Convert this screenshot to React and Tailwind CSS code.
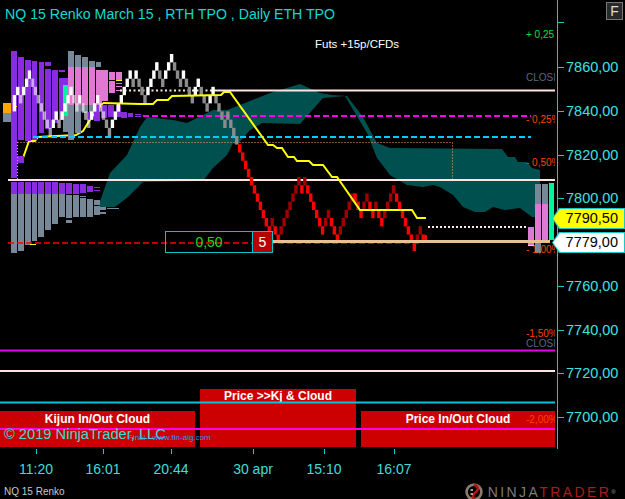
const PURPLE = "#8a2be2";
const GREY = "#778899";
const PINK = "#e078d4";
const SPRING = "#00f59a";

const BARS = [
  [11, 51, 6, 127, PURPLE], [18, 57, 6, 83, PURPLE], [25, 60, 6, 81, PURPLE], [32, 61, 5, 79, PURPLE],
  [39, 62, 5, 71, PURPLE], [45, 62, 6, 4, PURPLE], [45, 69, 6, 60, PURPLE], [52, 70, 6, 53, PURPLE],
  [59, 70, 6, 2, PURPLE], [59, 78, 9, 42, PURPLE], [63, 116, 5, 16, GREY], [63, 85, 5, 31, SPRING],
  [68, 51, 6, 89, GREY], [75, 55, 6, 78, GREY], [82, 57, 6, 56, GREY], [89, 61, 6, 52, GREY], [96, 62, 5, 5, GREY],
  [68, 67, 6, 38, PINK], [75, 67, 6, 38, PINK], [82, 67, 6, 38, PINK], [89, 67, 6, 38, PINK], [96, 70, 6, 35, PINK],
  [102, 70, 6, 31, PINK], [109, 72, 6, 8, PINK], [109, 81, 6, 12, PINK], [116, 72, 6, 8, PINK],
  [116, 83, 6, 1, PINK], [116, 86, 6, 1, PINK], [116, 90, 6, 1, PINK], [116, 80, 6, 1, "#ffff00"],
  [87, 112, 5, 8, PURPLE], [94, 105, 6, 16, PURPLE], [101, 105, 6, 13, PURPLE], [108, 105, 6, 12, PURPLE],
  [116, 105, 5, 12, PURPLE], [121, 112, 6, 6, PURPLE], [128, 113, 5, 4, PURPLE], [135, 114, 6, 1, PURPLE], [135, 116, 6, 1, PURPLE],
  [3, 103, 8, 10, "#ffa500"], [3, 113, 8, 9, GREY], [17, 156, 7, 7, PURPLE], [14, 106, 3, 1, "#ffff00"],
  [11, 182, 6, 12, PURPLE], [18, 182, 6, 12, PURPLE], [25, 182, 6, 12, PURPLE], [32, 182, 5, 12, PURPLE],
  [38, 182, 6, 12, PURPLE], [45, 182, 6, 12, PURPLE], [52, 182, 6, 12, PURPLE], [59, 183, 6, 11, PURPLE],
  [66, 183, 6, 11, PURPLE], [73, 184, 6, 10, PURPLE], [80, 184, 6, 9, PURPLE], [87, 186, 6, 6, PURPLE],
  [94, 187, 6, 1, PURPLE], [94, 190, 6, 1, PURPLE],
  [11, 194, 6, 59, GREY], [18, 194, 6, 57, GREY], [25, 194, 6, 51, GREY], [32, 194, 5, 47, GREY], [38, 194, 6, 43, GREY],
  [45, 194, 6, 36, GREY], [52, 194, 6, 30, GREY], [59, 194, 6, 23, GREY], [66, 195, 6, 23, GREY], [66, 220, 6, 3, GREY],
  [73, 195, 6, 22, GREY], [80, 196, 6, 1, GREY], [80, 198, 6, 19, GREY], [87, 199, 6, 18, GREY],
  [94, 200, 6, 5, GREY], [94, 206, 6, 9, GREY], [100, 207, 6, 3, GREY], [100, 212, 6, 2, GREY], [107, 208, 6, 1, GREY], [113, 208, 6, 1, GREY],
  [30, 244, 6, 1, "#ffff00"],
  [528, 227, 6, 18, PINK], [528, 245, 6, 1, "#ffff00"], [535, 184, 6, 20, GREY], [535, 204, 6, 39, PINK], [535, 243, 6, 10, GREY],
  [542, 184, 6, 20, GREY], [542, 204, 6, 36, PINK], [549, 183, 5, 57, SPRING],
];

const CLOUD = "98,207 110,173 127,155 140,127 147,117 173,120 187,123 213,110 227,110 245,103 270,93 300,84 320,93 332,95 347,96 363,117 377,143 390,148 502,149 508,157 515,157 518,162 527,162 532,168 540,170 540,217 532,217 520,208 505,210 493,207 485,212 475,212 463,207 453,195 440,187 433,185 423,187 407,185 390,175 377,158 367,133 355,113 345,96 323,98 300,124 262,123 250,130 237,145 233,143 227,155 213,168 203,181 143,182 128,197 115,207";

const KIJUN_A = "23,158 29,141 35,141 38,137 76,135 83,131 88,123 91,118 103,103";
const KIJUN_B = "103,103 140,104 153,104 157,100 168,100 172,96 221,95 224,92 230,92 263,138 268,145 273,145 277,148 282,148 288,157 294,157 297,161 309,161 313,165 323,165 332,177 337,177 360,210 412,210 417,218 426,218";

const SEQ =
  "UDUUUDDDDDDDUUDUUUUDDUDDDUUUDDDDUUUU" +
  "UUUDUDDDUUUUDDUUUDDDUDDDUUDDDUUDDDDgDDD" +
  "DDDDDDDDDDDUDDUUUUUUUDUDDDDDDUUDDDUUUUU^DDDUUDDUDDUUUUDDDDDDDUUD";

function makeBricks() {
  const s = 8.2;
  const out = [
    { x: 12.7, y: 103, c: "#ffffff" },
    { x: 12.7, y: 95, c: "#ffffff" },
  ];
  let top = 95;
  let bot = 103;
  let i = 0;
  for (const ch of SEQ) {
    if (ch === "^") {
      top -= s;
      bot -= s;
      continue;
    }
    const isRed = i >= 75;
    if (ch === "D") {
      top = bot;
      bot = bot + s;
    } else {
      bot = top;
      top = top - s;
    }
    let c;
    if (isRed) c = ch === "D" ? "#ff0000" : "#a00000";
    else if (ch === "U") c = "#ffffff";
    else if (ch === "g") c = "#8c8c8c";
    else c = i > 35 ? "#8c8c8c" : "rgba(255,255,255,0.58)";
    out.push({ x: 16 + i * 2.96, y: top, c });
    i += 1;
  }
  return out;
}

const BRICKS = makeBricks();

function Chart() {
  return (
    <svg viewBox="0 0 557 449" className="absolute inset-0 h-[449px] w-[557px]">
      <polygon points={CLOUD} fill="#005050" />
      <polyline points={KIJUN_A} fill="none" stroke="#ffff00" strokeWidth="2" />
      {BARS.map(([x, y, w, h, c], i) => (
        <rect key={i} x={x} y={y} width={w} height={h} fill={c} />
      ))}
      <polyline points="17.5,142.5 452.5,142.5 452.5,180" fill="none" stroke="#ffa070" strokeDasharray="1 2" />
      <line x1="17.5" y1="142" x2="17.5" y2="180" stroke="#ffa070" strokeDasharray="1 2" />
      <line x1="120" y1="90.5" x2="210" y2="90.5" stroke="#ffe4e1" strokeWidth="2" strokeDasharray="2 2.5" />
      <line x1="210" y1="90.5" x2="555" y2="90.5" stroke="#ffe4e1" strokeWidth="2" />
      <line x1="143" y1="116" x2="531" y2="116" stroke="#ff00ee" strokeWidth="2" strokeDasharray="6 3" />
      <line x1="33" y1="137" x2="531" y2="137" stroke="#00ccff" strokeWidth="2" strokeDasharray="6 3" />
      <line x1="8" y1="180" x2="555" y2="180" stroke="#ffe4e1" strokeWidth="2" />
      <line x1="8" y1="243" x2="420" y2="243" stroke="#ff0000" strokeWidth="1.6" strokeDasharray="6 3" />
      <line x1="428" y1="227" x2="527" y2="227" stroke="#ffe4e1" strokeWidth="2" strokeDasharray="2 2" />
      {BRICKS.map((b, i) => (
        <rect key={i} x={b.x} y={b.y} width="3.4" height="8.4" fill={b.c} />
      ))}
      <rect x="425" y="235" width="2" height="6" fill="#ff0000" />
      <polyline points={KIJUN_B} fill="none" stroke="#ffff00" strokeWidth="2" />
      <line x1="273" y1="241.5" x2="550" y2="241.5" stroke="#e8c192" strokeWidth="3" />
      <line x1="0" y1="350.5" x2="555" y2="350.5" stroke="#e600e6" strokeWidth="2" />
      <line x1="0" y1="371" x2="555" y2="371" stroke="#ffe4e1" strokeWidth="2" />
      <line x1="0" y1="402.5" x2="555" y2="402.5" stroke="#00c4e0" strokeWidth="2" />
      <line x1="0" y1="429" x2="555" y2="429" stroke="#ff00e6" strokeWidth="2" />
    </svg>
  );
}

function PriceAxis() {
  return (
    <div className="flex w-[68px] flex-col border-l border-[#1ec8c8] pt-[22px]">
      <div className="h-[1px] w-[6px] shrink-0 bg-[#1ec8c8]" />
      <div className="h-[43px] shrink-0" />
      {["7860,00", "7840,00", "7820,00", "7800,00", "", "7760,00", "7740,00", "7720,00", "7700,00"].map((p, i) => (
        <div key={i} className="flex h-[43.75px] shrink-0 items-start gap-[2px]">
          <div className="mt-[1px] h-[1px] w-[6px] bg-[#1ec8c8]" />
          <span className="-mt-[7px] text-[14.5px] leading-[16px] text-[#3fe0e0]">{p}</span>
        </div>
      ))}
    </div>
  );
}

function Tag({ outer, text, y }) {
  return (
    <div className={`absolute left-[552px] h-[21px] w-[73px] bg-[#16c8c8] [clip-path:polygon(7px_0,100%_0,100%_100%,7px_100%,0_50%)] ${y}`}>
      <div className={`ml-[1px] mt-[1px] flex h-[19px] w-[71px] items-center justify-end pr-[6px] text-[14.5px] text-black [clip-path:polygon(7px_0,100%_0,100%_100%,7px_100%,0_50%)] ${outer}`}>
        {text}
      </div>
    </div>
  );
}

const TIMES = [
  ["w-[72px]", "11:20"],
  ["w-[62px]", "16:01"],
  ["w-[74px]", "20:44"],
  ["w-[90px]", "30 apr"],
  ["w-[52px]", "15:10"],
  ["w-[88px]", "16:07"],
];

function PctLabel({ className, text, color }) {
  return (
    <div className={`absolute left-[526px] w-[29px] overflow-hidden whitespace-nowrap text-[10px] leading-[12px] ${color} ${className}`}>
      {text}
    </div>
  );
}

function NinjaLogo() {
  return (
    <svg viewBox="0 0 18 18" className="h-[18px] w-[18px]">
      <circle cx="9" cy="9" r="7.4" fill="none" stroke="#8a7a6c" strokeWidth="2.6" />
      <path d="M9 1.5C13.5 3.5 14 7 10.5 9.5S7.5 14.5 9.5 16.5" fill="none" stroke="#b01818" strokeWidth="2.6" />
      <path d="M5.5 7h2.5M5.5 11h2.5" stroke="#d8d0c4" strokeWidth="1.3" />
    </svg>
  );
}

export default function App() {
  return (
    <div className="relative flex h-[499px] w-[625px] flex-col overflow-hidden bg-black font-['Liberation_Sans',Arial,sans-serif]">
      <div className="flex h-[449px]">
        <div className="relative h-[449px] w-[557px]">
          <div className="absolute inset-x-0 bottom-[2px] flex items-end">
            <div className="h-[36px] w-[195px] bg-[#cc0000] pt-[1px] text-center text-[12px] font-bold leading-[14px] text-white">Kijun In/Out Cloud</div>
            <div className="ml-[5px] h-[58px] w-[156px] bg-[#cc0000] text-center text-[12px] font-bold leading-[14px] text-white">Price &gt;&gt;Kj &amp; Cloud</div>
            <div className="ml-[5px] h-[36px] w-[194px] bg-[#cc0000] pt-[1px] text-center text-[12px] font-bold leading-[14px] text-white">Price In/Out Cloud</div>
          </div>
          <Chart />
          <div className="absolute left-[5px] top-[6px] whitespace-nowrap text-[14.15px] leading-[16px] text-[#14d8d0]">NQ 15 Renko March 15 , RTH TPO , Daily ETH TPO</div>
          <div className="absolute left-[315px] top-[37px] whitespace-nowrap text-[11.5px] leading-[14px] text-white">Futs +15p/CFDs</div>
          <PctLabel className="top-[29px]" text="+ 0,25" color="text-[#00e040]" />
          <PctLabel className="top-[72px]" text="CLOSI" color="text-[#5a6a80]" />
          <PctLabel className="top-[114px]" text="- 0,25%" color="text-[#ff4000]" />
          <PctLabel className="top-[157px]" text="- 0,50%" color="text-[#ff4000]" />
          <PctLabel className="top-[244px]" text="- 1,00%" color="text-[#ff4000]" />
          <PctLabel className="top-[328px]" text="-1,50%" color="text-[#ff4000]" />
          <PctLabel className="top-[338px]" text="CLOSI" color="text-[#5a6a80]" />
          <PctLabel className="top-[414px]" text="-2,00%" color="text-[#ff4000]" />
          <div className="absolute left-[165px] top-[231px] flex h-[22px] w-[108px] border border-[#10c0c8]">
            <div className="flex flex-1 items-center justify-center text-[14px] text-[#20d820]">0,50</div>
            <div className="flex w-[20px] items-center justify-center border-l border-[#10c0c8] bg-[#b80000] text-[14px] text-white">5</div>
          </div>
          <div className="absolute left-[4px] top-[426px] whitespace-nowrap text-[14.67px] leading-[16px] text-[#3fdcd0]">© 2019 NinjaTrader, LLC</div>
          <div className="absolute left-[128px] top-[432px] whitespace-nowrap text-[8px] leading-[12px] text-[#2a90ff]">Final - www.fin-alg.com</div>
        </div>
        <PriceAxis />
      </div>
      <div className="h-[1px] w-[558px] bg-[#1ec8c8]" />
      <div className="flex">
        {TIMES.map(([w, t]) => (
          <div key={t} className={`flex flex-col items-center ${w}`}>
            <div className="h-[5px] w-[1px] bg-[#1ec8c8]" />
            <span className="mt-[7px] text-[14px] leading-[16px] text-[#3fdcd8]">{t}</span>
          </div>
        ))}
      </div>
      <div className="mt-[6px] flex items-center justify-between pl-[4px] pr-[7px]">
        <span className="text-[10px] leading-[12px] text-[#c8c8c8]">NQ 15 Renko</span>
        <div className="flex items-center gap-[5px]">
          <NinjaLogo />
          <span className="whitespace-nowrap text-[14px] font-light leading-[16px] tracking-[2.4px]">
            <span className="text-[#7a7a7a]">NINJA</span>
            <span className="text-[#a81c1c]">TRADER</span>
            <sup className="text-[6px] text-[#a0a0a0]">®</sup>
          </span>
        </div>
      </div>
      <Tag y="top-[208px]" outer="bg-[#ffff00]" text="7790,50" />
      <Tag y="top-[232px]" outer="bg-white" text="7779,00" />
      <div className="absolute right-[2px] top-[2px] flex h-[18px] w-[17px] items-center justify-center border border-[#777] bg-[#2a2a2a] text-[14px] leading-none text-[#ddd]">F</div>
    </div>
  );
}
